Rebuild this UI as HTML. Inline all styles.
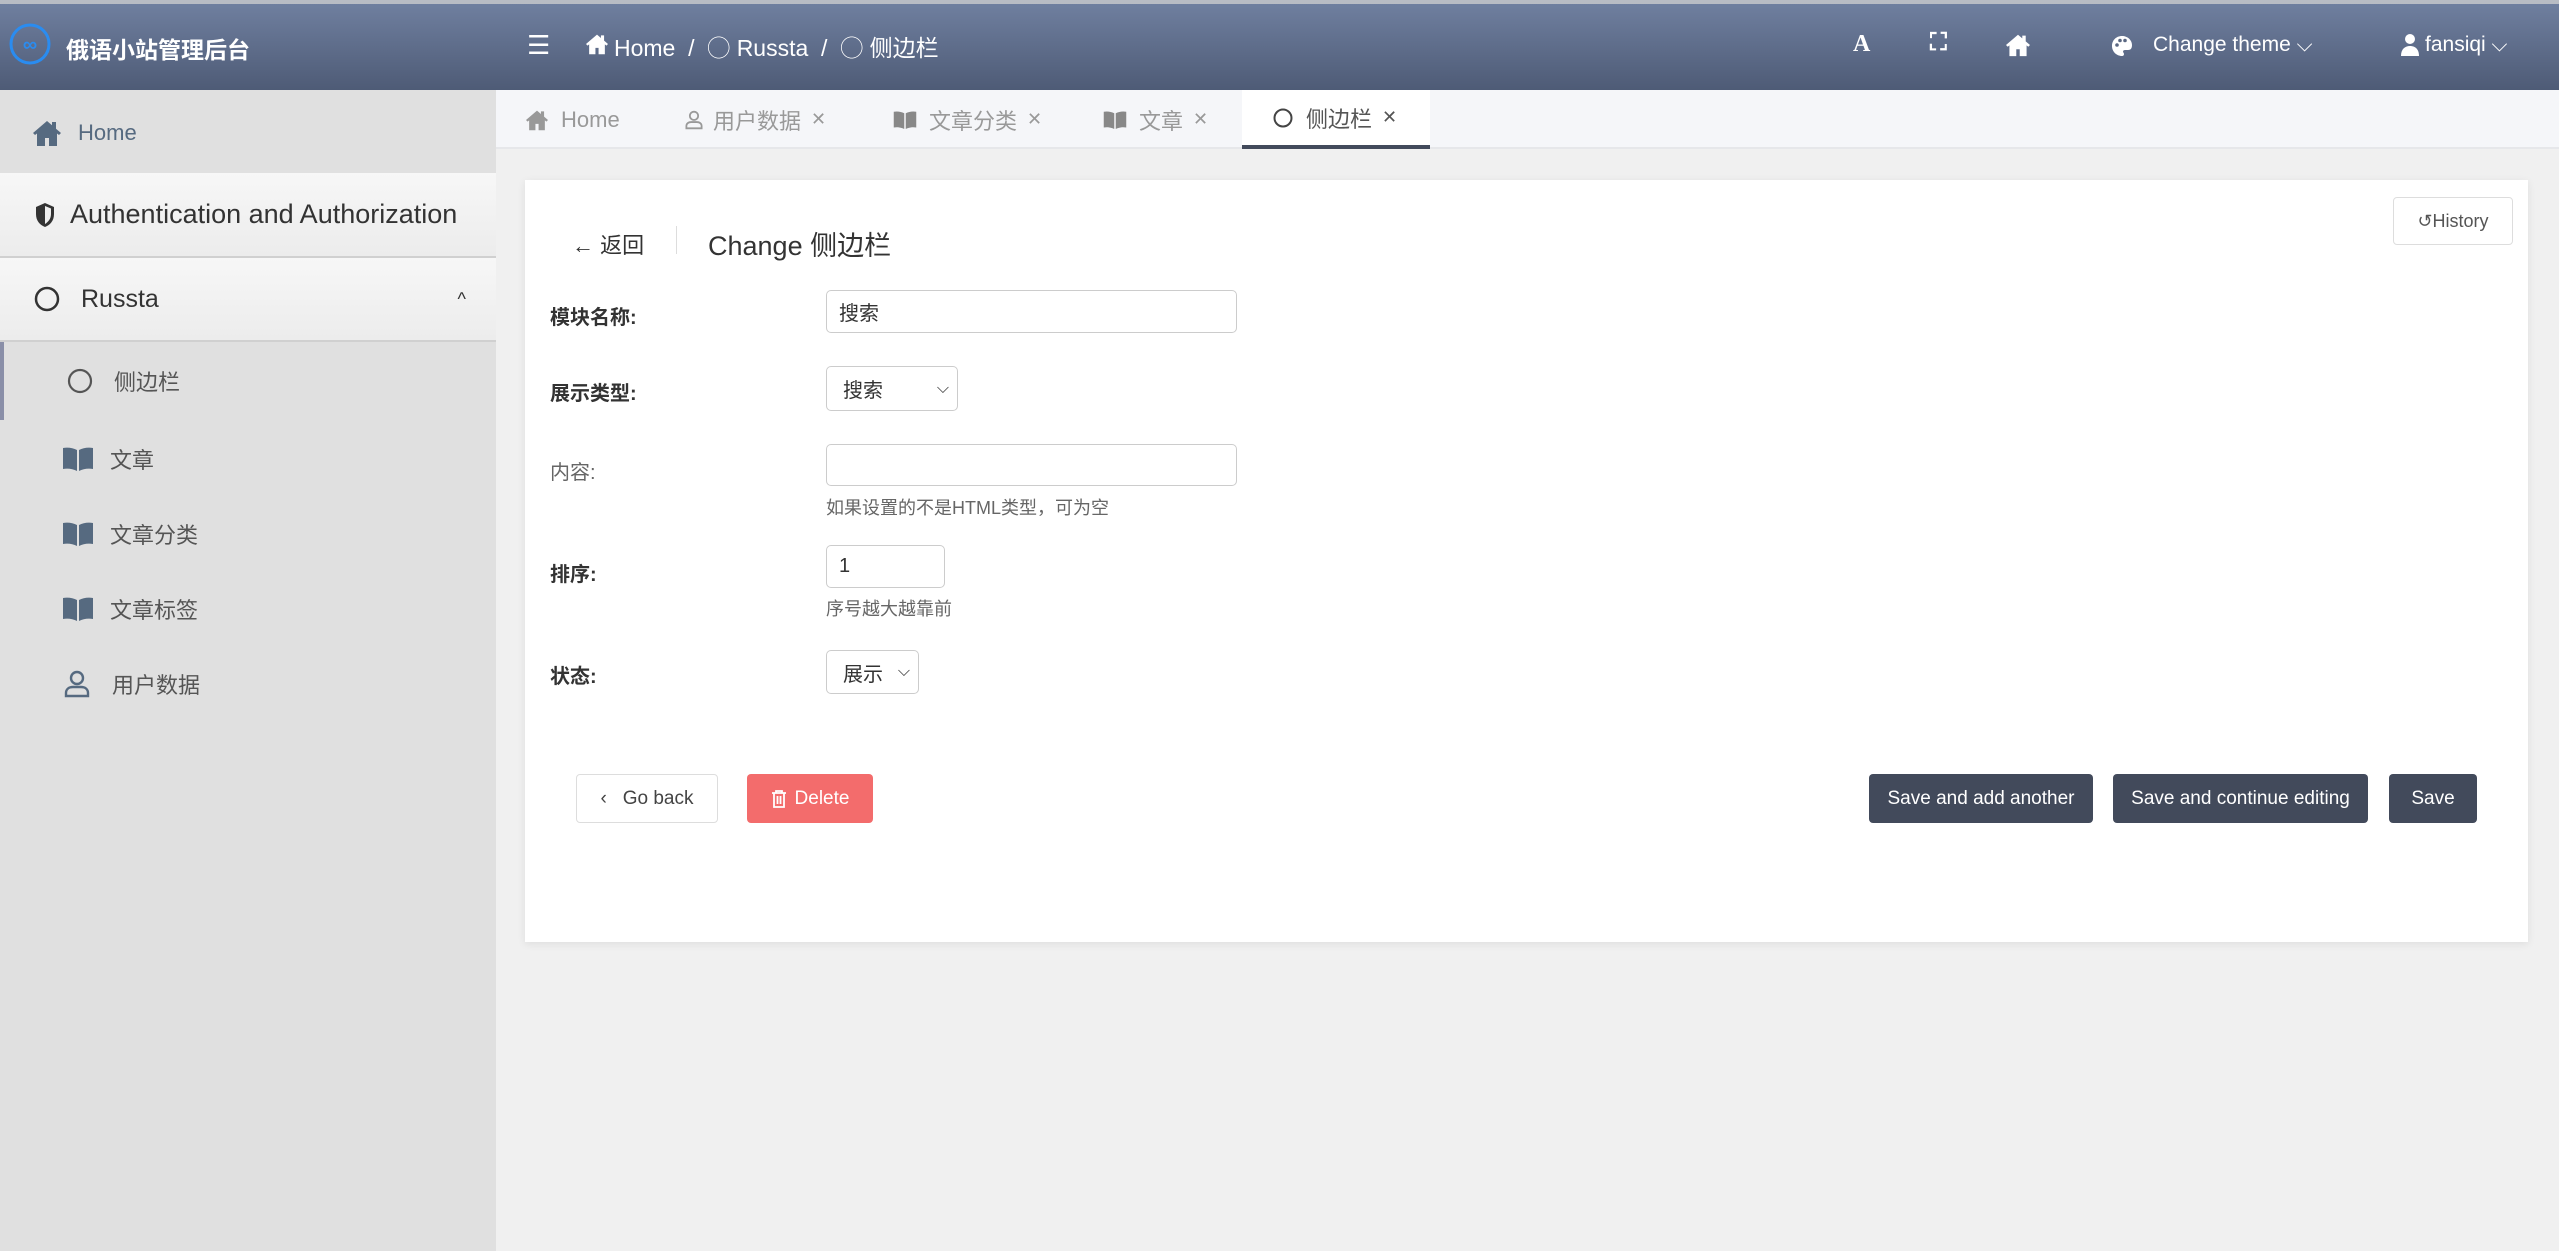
<!DOCTYPE html>
<html><head><meta charset="utf-8"><style>
*{box-sizing:border-box;margin:0;padding:0}
body{width:2559px;height:1251px;overflow:hidden;background:#f0f0f0;font-family:"Liberation Sans","Noto Sans CJK SC",sans-serif;position:relative;color:#333}
.a{position:absolute}
.hdr{left:0;top:0;width:2559px;height:90px;background:linear-gradient(#6f7f9f,#4e5b76);border-top:4px solid #b8bcc4}
.w{color:#fff}
.sb{left:0;top:90px;width:496px;height:1161px;background:#e0e0e0}
.si{position:absolute;left:0;width:496px;display:flex;align-items:center;color:#555}
.tabs{left:496px;top:90px;width:2063px;height:59px;background:#f5f6f9;border-bottom:2px solid #e6e7ea}
.tab{position:absolute;top:90px;height:59px;display:flex;align-items:center;font-size:22px;color:#999}
.card{left:525px;top:180px;width:2003px;height:762px;background:#fff;box-shadow:0 2px 8px rgba(0,0,0,.08)}
.lbl{position:absolute;left:550px;font-size:20px;font-weight:bold;color:#333}
.inp{position:absolute;left:826px;border:1.5px solid #ccc;border-radius:5px;background:#fff;font-size:20px;display:flex;align-items:center;padding-left:12px;color:#333}
.help{position:absolute;left:826px;font-size:18px;color:#666}
.btn{position:absolute;top:774px;height:49px;border-radius:4px;display:flex;align-items:center;justify-content:center;font-size:19px}
.dk{background:#424a5b;color:#fff}
</style></head><body>
<svg width="0" height="0" style="position:absolute"><defs>
<symbol id="book" viewBox="0 0 32 26"><path d="M1 2c5-1 10 0 14 2v21c-4-2-9-3-14-2z M17 4c4-2 9-3 14-2v21c-5-1-10 0-14 2z" fill="currentColor"/></symbol>
<symbol id="house" viewBox="0 0 30 28"><path d="M15 2L1 14l2 2 2-1.5V27h8v-8h4v8h8V14.5l2 1.5 2-2-5-4.3V3h-4v3.3z" fill="currentColor"/></symbol>
</defs></svg>
<div class="a hdr"></div>
<svg class="a" style="left:8px;top:20px" width="44" height="48" viewBox="0 0 44 48"><circle cx="22" cy="24" r="19" fill="none" stroke="#2a8cf0" stroke-width="3"/><text x="22" y="31" text-anchor="middle" font-size="20" font-weight="bold" fill="#2a8cf0" font-family="Liberation Sans">∞</text></svg>
<div class="a w" style="left:66px;top:31px;font-size:23px;font-weight:bold">俄语小站管理后台</div>
<div class="a w" style="left:527px;top:30px;font-size:26px">☰</div>
<svg class="a w" style="left:585px;top:33px;color:#fff" width="24" height="22"><use href="#house"/></svg>
<div class="a w" style="left:614px;top:29px;font-size:23px">Home &nbsp;/ &nbsp;◯ Russta &nbsp;/ &nbsp;◯ 侧边栏</div>
<div class="a w" style="left:1853px;top:31px;font-size:24px;font-weight:bold;font-family:'Liberation Serif'">A</div>
<div class="a w" style="left:1930px;top:29px;font-size:24px;font-weight:bold">⛶</div>
<svg class="a" style="left:2005px;top:33px;color:#fff" width="26" height="24"><use href="#house"/></svg>
<svg class="a" style="left:2110px;top:34px" width="24" height="24" viewBox="0 0 24 24"><path d="M12 2C6 2 2 6.5 2 12s4.5 10 10 10c1.5 0 2-1 2-2s-1-1.5-1-2.5 1-1.5 2-1.5h3c3 0 4-2 4-5 0-5-4.5-9-10-9z" fill="#fff"/><circle cx="7" cy="11" r="1.8" fill="#5a6782"/><circle cx="10" cy="6.5" r="1.8" fill="#5a6782"/><circle cx="15" cy="6.5" r="1.8" fill="#5a6782"/></svg>
<div class="a w" style="left:2153px;top:33px;font-size:21px">Change theme ⌵</div>
<svg class="a" style="left:2400px;top:33px" width="20" height="24" viewBox="0 0 20 24"><circle cx="10" cy="6" r="5" fill="#fff"/><path d="M1 23c0-7 4-10 9-10s9 3 9 10z" fill="#fff"/></svg>
<div class="a w" style="left:2425px;top:33px;font-size:21px">fansiqi ⌵</div>

<div class="a sb"></div>
<div class="si" style="top:93px;height:80px;font-size:22px;color:#566a80"><svg style="margin-left:32px;margin-right:16px;color:#566a80" width="30" height="28"><use href="#house"/></svg>Home</div>
<div class="si" style="top:173px;height:85px;font-size:27px;color:#333;background:linear-gradient(#f7f7f7,#ececec);border-bottom:2px solid #d0d0d0"><svg style="margin-left:34px;margin-right:14px" width="22" height="26" viewBox="0 0 22 26"><path d="M11 1L2 5v7c0 7 4 11 9 13 5-2 9-6 9-13V5z" fill="#333"/><path d="M11 4v18c3-2 6-5 6-10V6.5z" fill="#eee"/></svg>Authentication and Authorization</div>
<div class="si" style="top:258px;height:84px;font-size:25px;color:#333;background:linear-gradient(#f7f7f7,#ececec);border-bottom:2px solid #d0d0d0"><svg style="margin-left:33px;margin-right:20px" width="28" height="28"><circle cx="14" cy="14" r="11" fill="none" stroke="#333" stroke-width="2.5"/></svg>Russta<span style="position:absolute;right:30px;font-size:18px">^</span></div>
<div class="si" style="top:342px;height:78px;font-size:22px;border-left:4px solid #8a8fa8"><svg style="margin-left:62px;margin-right:20px" width="28" height="28"><circle cx="14" cy="14" r="11" fill="none" stroke="#555" stroke-width="2.2"/></svg>侧边栏</div>
<div class="si" style="top:420px;height:78px;font-size:22px"><svg style="margin-left:62px;margin-right:16px;color:#566a80" width="32" height="26"><use href="#book"/></svg>文章</div>
<div class="si" style="top:495px;height:78px;font-size:22px"><svg style="margin-left:62px;margin-right:16px;color:#566a80" width="32" height="26"><use href="#book"/></svg>文章分类</div>
<div class="si" style="top:570px;height:78px;font-size:22px"><svg style="margin-left:62px;margin-right:16px;color:#566a80" width="32" height="26"><use href="#book"/></svg>文章标签</div>
<div class="si" style="top:645px;height:78px;font-size:22px"><svg style="margin-left:64px;margin-right:22px" width="26" height="28" viewBox="0 0 26 28"><circle cx="13" cy="8" r="6" fill="none" stroke="#566a80" stroke-width="2.4"/><path d="M2 26v-3c0-4 3-6 7-6h8c4 0 7 2 7 6v3z" fill="none" stroke="#566a80" stroke-width="2.4"/></svg>用户数据</div>

<div class="a tabs"></div>
<div class="tab" style="left:525px"><svg style="margin-right:12px;color:#999" width="24" height="22"><use href="#house"/></svg>Home</div>
<div class="tab" style="left:685px"><svg style="margin-right:10px" width="18" height="22" viewBox="0 0 26 28"><circle cx="13" cy="8" r="6" fill="none" stroke="#999" stroke-width="2.6"/><path d="M2 26v-3c0-4 3-6 7-6h8c4 0 7 2 7 6v3z" fill="none" stroke="#999" stroke-width="2.6"/></svg>用户数据 <span style="font-size:18px;margin-left:10px">✕</span></div>
<div class="tab" style="left:893px"><svg style="margin-right:12px;color:#888" width="24" height="20"><use href="#book"/></svg>文章分类 <span style="font-size:18px;margin-left:10px">✕</span></div>
<div class="tab" style="left:1103px"><svg style="margin-right:12px;color:#888" width="24" height="20"><use href="#book"/></svg>文章 <span style="font-size:18px;margin-left:10px">✕</span></div>
<div class="tab" style="left:1242px;width:188px;background:#fff;border-bottom:4px solid #424a5b;color:#555;padding-left:30px"><svg style="margin-right:12px" width="22" height="22"><circle cx="11" cy="11" r="8.5" fill="none" stroke="#444" stroke-width="2"/></svg>侧边栏 <span style="font-size:18px;margin-left:10px">✕</span></div>

<div class="a card"></div>
<div class="a" style="left:2393px;top:197px;width:120px;height:48px;border:1.5px solid #ddd;border-radius:4px;font-size:18px;color:#555;display:flex;align-items:center;justify-content:center">↺History</div>
<div class="a" style="left:572px;top:228px;font-size:22px;color:#333">← 返回</div>
<div class="a" style="left:676px;top:226px;width:1px;height:28px;background:#ddd"></div>
<div class="a" style="left:708px;top:224px;font-size:27px;color:#333">Change 侧边栏</div>

<div class="lbl" style="top:301px">模块名称:</div>
<div class="inp" style="top:290px;width:411px;height:43px">搜索</div>
<div class="lbl" style="top:377px">展示类型:</div>
<div class="inp" style="top:366px;width:132px;height:45px;padding-left:16px">搜索<span style="position:absolute;right:8px;font-size:16px">⌵</span></div>
<div class="lbl" style="top:456px;font-weight:normal;color:#666">内容:</div>
<div class="inp" style="top:444px;width:411px;height:42px"></div>
<div class="help" style="top:494px">如果设置的不是HTML类型，可为空</div>
<div class="lbl" style="top:558px">排序:</div>
<div class="inp" style="top:545px;width:119px;height:43px">1</div>
<div class="help" style="top:595px">序号越大越靠前</div>
<div class="lbl" style="top:660px">状态:</div>
<div class="inp" style="top:650px;width:93px;height:44px;padding-left:16px">展示<span style="position:absolute;right:8px;font-size:16px">⌵</span></div>

<div class="btn" style="left:576px;width:142px;border:1.5px solid #ddd;color:#444;background:#fff">‹&nbsp;&nbsp; Go back</div>
<div class="btn" style="left:747px;width:126px;background:#f36c6c;color:#fff"><svg style="margin-right:8px" width="16" height="20" viewBox="0 0 16 20"><path d="M1 4h14M5 4V2h6v2M3 4v14h10V4M6.5 7v8M9.5 7v8" fill="none" stroke="#fff" stroke-width="1.8"/></svg>Delete</div>
<div class="btn dk" style="left:1869px;width:224px">Save and add another</div>
<div class="btn dk" style="left:2113px;width:255px">Save and continue editing</div>
<div class="btn dk" style="left:2389px;width:88px">Save</div>
</body></html>
